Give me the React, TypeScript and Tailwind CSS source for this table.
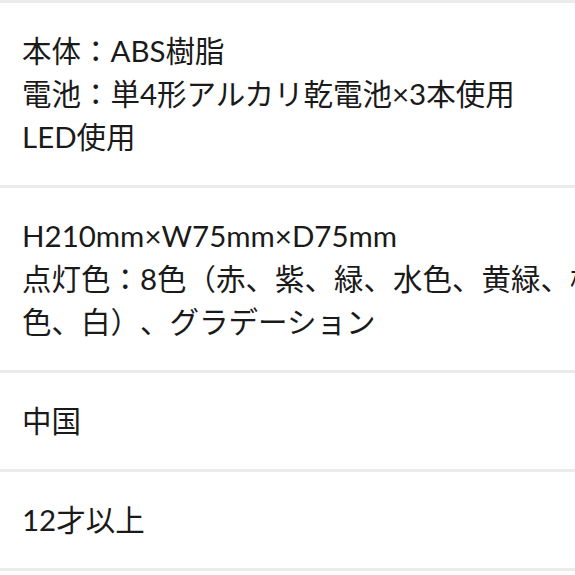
import React from 'react';

const sections: string[][] = [
  ['本体：ABS樹脂', '電池：単4形アルカリ乾電池×3本使用', 'LED使用'],
  ['H210mm×W75mm×D75mm', '点灯色：8色（赤、紫、緑、水色、黄緑、橙色、白）、グラデーション'],
  ['中国'],
  ['12才以上'],
];

export default function App() {
  return (
    <div className="w-[575px] h-[575px] overflow-hidden bg-white">
      <div className="w-[615px] border-t-[3px] border-[#ebebeb]">
        {sections.map((lines, i) => (
          <div
            key={i}
            className="border-b-[3px] border-[#ebebeb] pl-[22px] pr-[10px] pt-[26px] pb-[27px] text-[29.5px] leading-[43px] text-[#1a1a1a] [text-spacing-trim:space-all]"
            style={{ fontFamily: 'Lato, "Noto Sans CJK JP", sans-serif' }}
          >
            {lines.map((l, j) => (
              <div key={j}>{l}</div>
            ))}
          </div>
        ))}
      </div>
    </div>
  );
}
